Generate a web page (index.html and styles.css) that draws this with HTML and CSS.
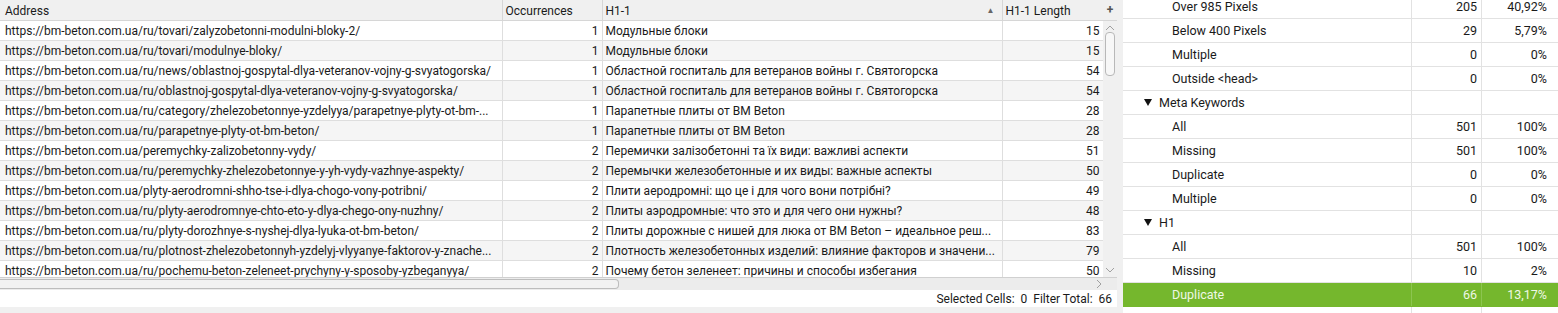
FILE: index.html
```html
<!DOCTYPE html>
<html lang="en">
<head>
  <meta charset="UTF-8">
  <title>H1 Duplicate</title>
  <link rel="stylesheet" href="styles.css">
</head>
<body>
  <div class="page">
    <div class="left-pane">
      <div class="grid">
        <div class="table-wrap">
          <table class="data">
            <colgroup>
              <col class="c-addr"><col class="c-occ"><col class="c-h1"><col class="c-len">
            </colgroup>
            <thead>
              <tr><th>Address</th><th>Occurrences</th><th class="sorted">H1-1 <span class="sort">&#9650;</span></th><th>H1-1 Length</th></tr>
            </thead>
            <tbody>
              <tr><td>https://bm-beton.com.ua/ru/tovari/zalyzobetonni-modulni-bloky-2/</td><td class="num">1</td><td>Модульные блоки</td><td class="num">15</td></tr>
              <tr><td>https://bm-beton.com.ua/ru/tovari/modulnye-bloky/</td><td class="num">1</td><td>Модульные блоки</td><td class="num">15</td></tr>
              <tr><td>https://bm-beton.com.ua/ru/news/oblastnoj-gospytal-dlya-veteranov-vojny-g-svyatogorska/</td><td class="num">1</td><td>Областной госпиталь для ветеранов войны г. Святогорска</td><td class="num">54</td></tr>
              <tr><td>https://bm-beton.com.ua/ru/oblastnoj-gospytal-dlya-veteranov-vojny-g-svyatogorska/</td><td class="num">1</td><td>Областной госпиталь для ветеранов войны г. Святогорска</td><td class="num">54</td></tr>
              <tr><td>https://bm-beton.com.ua/ru/category/zhelezobetonnye-yzdelyya/parapetnye-plyty-ot-bm-...</td><td class="num">1</td><td>Парапетные плиты от BM Beton</td><td class="num">28</td></tr>
              <tr><td>https://bm-beton.com.ua/ru/parapetnye-plyty-ot-bm-beton/</td><td class="num">1</td><td>Парапетные плиты от BM Beton</td><td class="num">28</td></tr>
              <tr><td>https://bm-beton.com.ua/peremychky-zalizobetonny-vydy/</td><td class="num">2</td><td>Перемички залізобетонні та їх види: важливі аспекти</td><td class="num">51</td></tr>
              <tr><td>https://bm-beton.com.ua/ru/peremychky-zhelezobetonnye-y-yh-vydy-vazhnye-aspekty/</td><td class="num">2</td><td>Перемычки железобетонные и их виды: важные аспекты</td><td class="num">50</td></tr>
              <tr><td>https://bm-beton.com.ua/plyty-aerodromni-shho-tse-i-dlya-chogo-vony-potribni/</td><td class="num">2</td><td>Плити аеродромні: що це і для чого вони потрібні?</td><td class="num">49</td></tr>
              <tr><td>https://bm-beton.com.ua/ru/plyty-aerodromnye-chto-eto-y-dlya-chego-ony-nuzhny/</td><td class="num">2</td><td>Плиты аэродромные: что это и для чего они нужны?</td><td class="num">48</td></tr>
              <tr><td>https://bm-beton.com.ua/ru/plyty-dorozhnye-s-nyshej-dlya-lyuka-ot-bm-beton/</td><td class="num">2</td><td>Плиты дорожные с нишей для люка от BM Beton – идеальное реш...</td><td class="num">83</td></tr>
              <tr><td>https://bm-beton.com.ua/ru/plotnost-zhelezobetonnyh-yzdelyj-vlyyanye-faktorov-y-znache...</td><td class="num">2</td><td>Плотность железобетонных изделий: влияние факторов и значени...</td><td class="num">79</td></tr>
              <tr><td>https://bm-beton.com.ua/ru/pochemu-beton-zeleneet-prychyny-y-sposoby-yzbeganyya/</td><td class="num">2</td><td>Почему бетон зеленеет: причины и способы избегания</td><td class="num">50</td></tr>
            </tbody>
          </table>
        </div>
        <div class="vscroll">
          <div class="corner">+</div>
          <div class="track">
            <svg class="arrow" width="10" height="6" viewBox="0 0 10 6"><path d="M1 5 L5 1 L9 5" fill="none" stroke="#a0a0a0" stroke-width="1"/></svg>
            <div class="thumb"></div>
            <div class="spacer"></div>
            <svg class="arrow" width="10" height="6" viewBox="0 0 10 6"><path d="M1 1 L5 5 L9 1" fill="none" stroke="#a0a0a0" stroke-width="1"/></svg>
          </div>
        </div>
      </div>
      <div class="hscroll">
        <div class="hthumb"></div>
        <svg class="harrow" width="6" height="10" viewBox="0 0 6 10"><path d="M1 1 L5 5 L1 9" fill="none" stroke="#a0a0a0" stroke-width="1"/></svg>
      </div>
      <div class="status">
        <span>Selected Cells:&nbsp; 0</span>
        <span>Filter Total:&nbsp; 66</span>
      </div>
    </div>

    <div class="right-pane">
      <div class="overview">
        <div class="row sub"><span class="label">Over 985 Pixels</span><span class="count">205</span><span class="pct">40,92%</span></div>
        <div class="row sub"><span class="label">Below 400 Pixels</span><span class="count">29</span><span class="pct">5,79%</span></div>
        <div class="row sub"><span class="label">Multiple</span><span class="count">0</span><span class="pct">0%</span></div>
        <div class="row sub"><span class="label">Outside &lt;head&gt;</span><span class="count">0</span><span class="pct">0%</span></div>
        <div class="row group"><span class="label"><i class="tri"></i>Meta Keywords</span><span class="count"></span><span class="pct"></span></div>
        <div class="row sub"><span class="label">All</span><span class="count">501</span><span class="pct">100%</span></div>
        <div class="row sub"><span class="label">Missing</span><span class="count">501</span><span class="pct">100%</span></div>
        <div class="row sub"><span class="label">Duplicate</span><span class="count">0</span><span class="pct">0%</span></div>
        <div class="row sub"><span class="label">Multiple</span><span class="count">0</span><span class="pct">0%</span></div>
        <div class="row group"><span class="label"><i class="tri"></i>H1</span><span class="count"></span><span class="pct"></span></div>
        <div class="row sub"><span class="label">All</span><span class="count">501</span><span class="pct">100%</span></div>
        <div class="row sub"><span class="label">Missing</span><span class="count">10</span><span class="pct">2%</span></div>
        <div class="row sub selected"><span class="label">Duplicate</span><span class="count">66</span><span class="pct">13,17%</span></div>
        <div class="row sub"><span class="label"></span><span class="count"></span><span class="pct"></span></div>
      </div>
      <div class="rscroll"><div class="rthumb"></div></div>
    </div>
  </div>
</body>
</html>
```

FILE: styles.css
```css
body {
  margin: 0;
  font-family: Roboto, "Liberation Sans", Arial, sans-serif;
  font-size: 12px;
  color: #1a1a1a;
  background: #f0f0f0;
}
.page {
  display: flex;
  height: 313px;
  overflow: hidden;
}
.left-pane {
  width: 1117px;
  display: flex;
  flex-direction: column;
}
.grid {
  display: flex;
  height: 277px;
  background: #fff;
}
.table-wrap {
  width: 1103px;
  overflow: hidden;
}
.data {
  table-layout: fixed;
  border-collapse: collapse;
  width: 1103px;
}
.c-addr { width: 502px; }
.c-occ { width: 100px; }
.c-h1 { width: 400px; }
.c-len { width: 101px; }
.data th {
  height: 19px;
  padding: 1px 4px 0 3px;
  text-align: left;
  font-weight: normal;
  background: #f0f0f0;
  border-right: 1px solid #d6d6d6;
  border-bottom: 1px solid #d6d6d6;
  white-space: nowrap;
  overflow: hidden;
}
.data th:first-child {
  padding-left: 5px;
}
.data th.sorted {
  position: relative;
}
.data th .sort {
  position: absolute;
  right: 7px;
  top: 6px;
  font-size: 8px;
  color: #666;
}
.data td {
  height: 18px;
  padding: 1px 4px 0 3px;
  border-right: 1px solid #dedede;
  border-bottom: 1px solid #dedede;
  white-space: nowrap;
  overflow: hidden;
}
.data td:first-child {
  padding-left: 5px;
}
.data tbody tr:nth-child(even) td {
  background: #f5f5f5;
}
.data td.num {
  text-align: right;
  padding-right: 3px;
}
.vscroll {
  width: 14px;
  display: flex;
  flex-direction: column;
  background: #f0f0f0;
}
.corner {
  height: 20px;
  border-bottom: 1px solid #d6d6d6;
  text-align: center;
  line-height: 20px;
  font-weight: bold;
  color: #555;
}
.track {
  flex: 1;
  display: flex;
  flex-direction: column;
  align-items: center;
  padding: 4px 0;
}
.track .thumb {
  width: 8px;
  height: 42px;
  margin-top: 1px;
  background: #f7f7f7;
  border: 1px solid #b8b8b8;
  border-radius: 4px;
}
.track .spacer {
  flex: 1;
}
.hscroll {
  height: 12px;
  border-top: 1px solid #d0d0d0;
  background: #ececec;
  display: flex;
  align-items: center;
  justify-content: space-between;
  padding-right: 15px;
}
.hthumb {
  width: 618px;
  height: 8px;
  background: #f2f2f2;
  border: 1px solid #bdbdbd;
  border-left: none;
  border-radius: 0 4px 4px 0;
}
.status {
  height: 17px;
  background: #fff;
  display: flex;
  justify-content: flex-end;
  align-items: center;
  gap: 6px;
  padding-right: 5px;
  font-size: 12px;
}
.right-pane {
  margin-left: 6px;
  width: 1435px;
  display: flex;
  background: #fff;
}
.overview {
  width: 1428px;
  margin-top: -5px;
}
.row {
  display: flex;
  height: 23px;
  border-bottom: 1px solid #e2e2e2;
  line-height: 24px;
  font-size: 12.5px;
}
.row .label {
  width: 288px;
  border-right: 1px solid #e2e2e2;
  white-space: nowrap;
}
.row.sub .label {
  padding-left: 49px;
  width: 239px;
}
.row.group .label {
  padding-left: 21px;
  width: 267px;
  display: flex;
  align-items: center;
}
.row .count {
  width: 65px;
  padding-right: 4px;
  text-align: right;
  border-right: 1px solid #e2e2e2;
}
.row .pct {
  width: 65px;
  padding-right: 4px;
  text-align: right;
}
.tri {
  width: 0;
  height: 0;
  border-left: 4px solid transparent;
  border-right: 4px solid transparent;
  border-top: 7px solid #111;
  margin-right: 7px;
}
.row.selected {
  background: #75b72d;
  color: #eef7e6;
  border-bottom-color: #75b72d;
}
.row.selected .label,
.row.selected .count {
  border-right-color: #8cc550;
}
.rscroll {
  width: 7px;
  background: #f0f0f0;
  position: relative;
}
.rthumb {
  position: absolute;
  left: 2px;
  top: 84px;
  width: 6px;
  height: 22px;
  border: 1px solid #bbb;
  border-right: none;
  border-radius: 4px 0 0 4px;
  background: #f7f7f7;
}
```
